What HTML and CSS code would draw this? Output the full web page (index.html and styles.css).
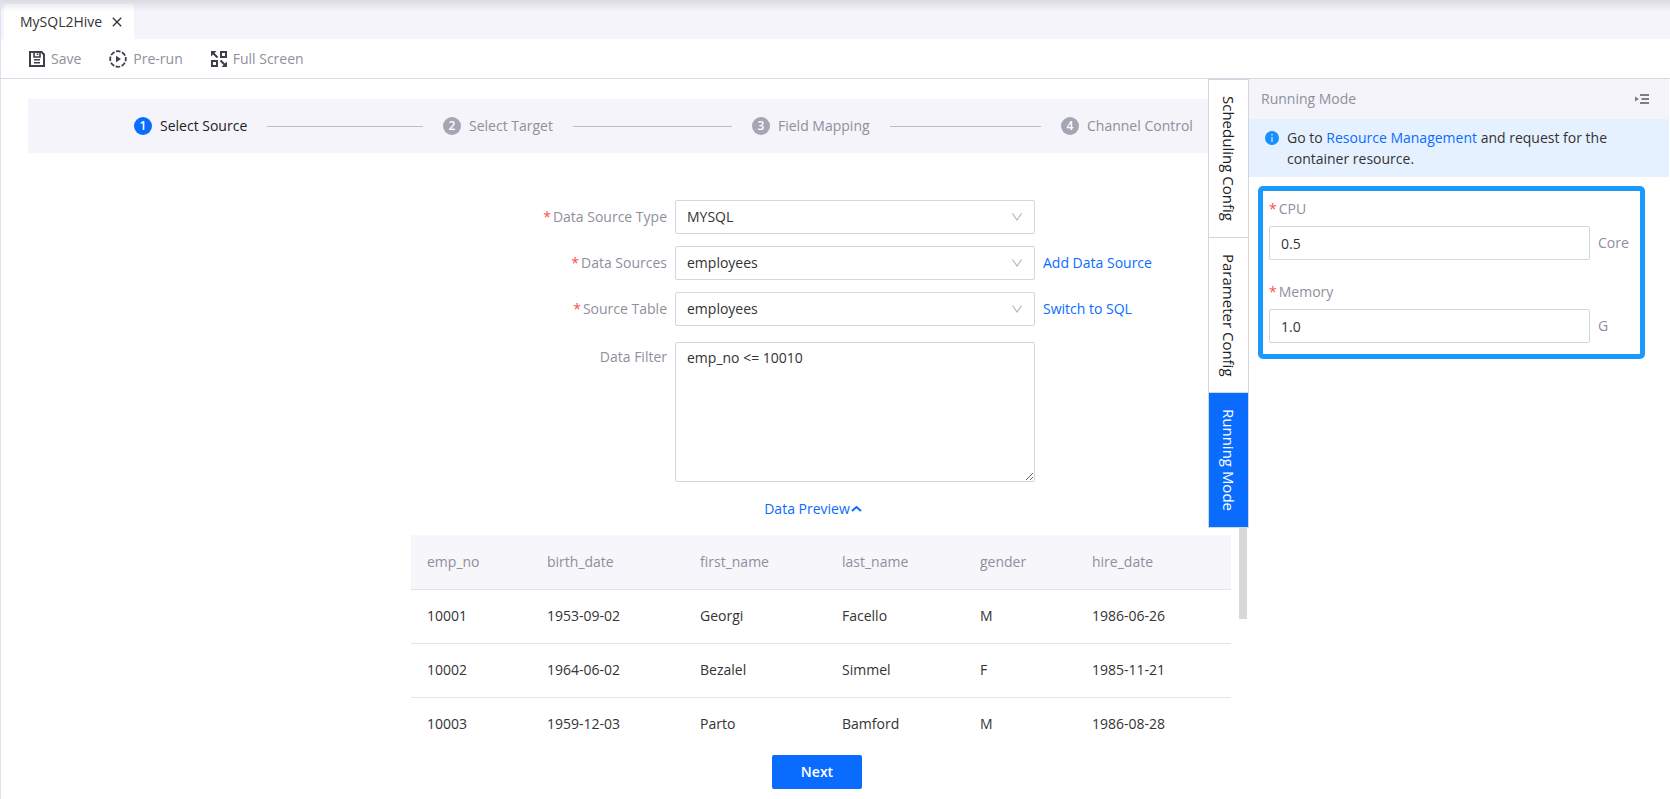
FILE: index.html
```html
<!DOCTYPE html>
<html lang="en">
<head>
<meta charset="utf-8">
<meta name="viewport" content="width=device-width, initial-scale=1">
<title>MySQL2Hive</title>
<link rel="stylesheet" href="styles.css">
</head>
<body>
<div class="app">
  <nav class="filetabs" aria-label="Open jobs">
    <div class="filetab">
      <span>MySQL2Hive</span>
      <button class="icon-button" type="button" aria-label="Close">
        <svg width="10" height="10" viewBox="0 0 10 10" fill="none" stroke="#333" stroke-width="1.3"><path d="M.8.8l8.4 8.4M9.2.8L.8 9.2"/></svg>
      </button>
    </div>
  </nav>

  <div class="toolbar">
    <button class="tool" type="button">
      <svg width="16" height="16" viewBox="0 0 16 16" fill="none" stroke="#3f3f4a" stroke-width="2"><path d="M1 1h11.5L15 3.500V15H1z"/><path d="M5 1v5h6V1M8.500 2.500V4" stroke-width="1.600"/><path d="M5 8.800h6M5 11.800h6" stroke-width="1.500"/></svg>
      Save
    </button>
    <button class="tool" type="button">
      <svg width="18" height="18" viewBox="0 0 18 18" fill="none" stroke="#3f3f4a" stroke-width="1.800"><circle cx="9" cy="9" r="7.800" stroke-dasharray="4.600 1.526" stroke-dashoffset="2.300"/><path d="M7 5.800L12 9l-5 3.200z" fill="#3f3f4a" stroke="none"/></svg>
      Pre-run
    </button>
    <button class="tool" type="button">
      <svg width="16" height="16" viewBox="0 0 16 16" fill="none" stroke="#3f3f4a" stroke-width="2"><path d="M10 1h5v5h-5zM1 10h5v5H1z"/><path d="M1.500 1.500l5 5M9.500 9.500l5 5"/><path d="M0 0h5.500L0 5.500zM16 16h-5.500L16 10.500z" fill="#3f3f4a" stroke="none"/></svg>
      Full Screen
    </button>
  </div>

  <div class="workspace">
    <main class="main">
      <div class="scroller">
        <ol class="steps">
          <li class="step step-active"><span class="step-number">1</span>Select Source</li>
          <li class="step"><span class="step-number">2</span>Select Target</li>
          <li class="step"><span class="step-number">3</span>Field Mapping</li>
          <li class="step"><span class="step-number">4</span>Channel Control</li>
        </ol>

        <form class="form">
          <label class="label required" for="type">Data Source Type</label>
          <div class="select">
            <select id="type"><option>MYSQL</option></select>
            <svg width="12" height="10" viewBox="0 0 12 10" fill="none" stroke="#b4b4c0" stroke-width="1.200"><path d="M1.500 1.500L6 8l4.500-6.500"/></svg>
          </div>
          <span></span>

          <label class="label required" for="source">Data Sources</label>
          <div class="select">
            <select id="source"><option>employees</option></select>
            <svg width="12" height="10" viewBox="0 0 12 10" fill="none" stroke="#b4b4c0" stroke-width="1.200"><path d="M1.500 1.500L6 8l4.500-6.500"/></svg>
          </div>
          <a class="link" href="#">Add Data Source</a>

          <label class="label required" for="table">Source Table</label>
          <div class="select">
            <select id="table"><option>employees</option></select>
            <svg width="12" height="10" viewBox="0 0 12 10" fill="none" stroke="#b4b4c0" stroke-width="1.200"><path d="M1.500 1.500L6 8l4.500-6.500"/></svg>
          </div>
          <a class="link" href="#">Switch to SQL</a>

          <label class="label label-top" for="filter">Data Filter</label>
          <textarea class="filter" id="filter">emp_no &lt;= 10010</textarea>
          <span></span>
        </form>

        <section class="preview">
          <button class="preview-toggle" type="button">Data Preview<svg width="11" height="10" viewBox="0 0 11 10" fill="none" stroke="#0a6cff" stroke-width="2"><path d="M1 7l4.500-4L10 7"/></svg></button>
          <table class="data">
            <colgroup><col class="c-no"><col class="c-birth"><col class="c-first"><col class="c-last"><col class="c-gender"><col></colgroup>
            <thead>
              <tr><th>emp_no</th><th>birth_date</th><th>first_name</th><th>last_name</th><th>gender</th><th>hire_date</th></tr>
            </thead>
            <tbody>
              <tr><td>10001</td><td>1953-09-02</td><td>Georgi</td><td>Facello</td><td>M</td><td>1986-06-26</td></tr>
              <tr><td>10002</td><td>1964-06-02</td><td>Bezalel</td><td>Simmel</td><td>F</td><td>1985-11-21</td></tr>
              <tr><td>10003</td><td>1959-12-03</td><td>Parto</td><td>Bamford</td><td>M</td><td>1986-08-28</td></tr>
            </tbody>
          </table>
        </section>
      </div>
      <div class="scroll-thumb"></div>
      <footer class="actions"><button class="primary" type="button">Next</button></footer>
      <div class="sidetabs">
        <button class="sidetab" type="button">Scheduling Config</button>
        <button class="sidetab" type="button">Parameter Config</button>
        <button class="sidetab sidetab-active" type="button">Running Mode</button>
      </div>
    </main>

    <aside class="panel">
      <header class="panel-header">
        <span>Running Mode</span>
        <button class="icon-button" type="button" aria-label="Collapse panel">
          <svg width="14" height="10" viewBox="0 0 14 10" fill="none" stroke="#7d7d8a" stroke-width="1.800"><path d="M5 1h9M6.500 5H14M5 9h9"/><path d="M0 2.500L4 5 0 7.500z" fill="#7d7d8a" stroke="none"/></svg>
        </button>
      </header>
      <div class="notice">
        <svg width="14" height="14" viewBox="0 0 14 14"><circle cx="7" cy="7" r="7" fill="#1890ff"/><path d="M7 3v1.600M7 6v5" stroke="#d8ecff" stroke-width="1.200"/></svg>
        <p>Go to <a class="link" href="#">Resource Management</a> and request for the container resource.</p>
      </div>
      <form class="resources">
        <div class="field">
          <label class="label required" for="cpu">CPU</label>
          <div class="field-row"><input id="cpu" type="text" value="0.5"><span>Core</span></div>
        </div>
        <div class="field">
          <label class="label required" for="memory">Memory</label>
          <div class="field-row"><input id="memory" type="text" value="1.0"><span>G</span></div>
        </div>
      </form>
    </aside>
  </div>
</div>
</body>
</html>
```
FILE: styles.css
```css
* {
  box-sizing: border-box;
}

body {
  margin: 0;
  color: #333;
  font: 14px/20px "Open Sans", "Noto Sans", sans-serif;
}

button,
input,
select,
textarea {
  color: inherit;
  font: inherit;
}

button {
  padding: 0;
  border: 0;
  background: none;
  cursor: pointer;
}

.link {
  color: #0a6cff;
  text-decoration: none;
}

.icon-button {
  display: flex;
}

.app {
  display: flex;
  flex-direction: column;
  height: 100vh;
  border-left: 1px solid #d9e4f2;
}

/* Job tabs */
.filetabs {
  position: relative;
  display: flex;
  padding: 4px 3px 0;
  background: #f4f4fa;
}

.filetabs::after {
  content: "";
  position: absolute;
  inset: 0 0 auto;
  height: 12px;
  background: linear-gradient(rgba(70, 70, 90, 0.14), rgba(70, 70, 90, 0));
  pointer-events: none;
}

.filetab {
  display: flex;
  align-items: center;
  gap: 10px;
  height: 35px;
  padding: 0 12px 0 16px;
  border-radius: 4px 4px 0 0;
  background: #fff;
}

/* Toolbar */
.toolbar {
  display: flex;
  gap: 28px;
  height: 40px;
  padding: 0 28px;
  border-bottom: 1px solid #d9d9e3;
}

.tool {
  display: flex;
  align-items: center;
  gap: 6px;
  color: #8f8f9c;
}

.workspace {
  display: flex;
  flex: 1;
  min-height: 0;
}

/* Main pane */
.main {
  position: relative;
  display: flex;
  flex: 1;
  flex-direction: column;
  min-width: 0;
}

.scroller {
  flex: 1;
  min-height: 0;
  padding: 20px 18px 0 27px;
  overflow-y: auto;
  scrollbar-width: none;
}

.scroll-thumb {
  position: absolute;
  top: 2px;
  right: 2px;
  width: 8px;
  height: 538px;
  background: #d8d8d8;
}

.steps {
  display: flex;
  gap: 20px;
  margin: 0;
  padding: 17px 18px 17px 106px;
  background: #f4f4fa;
  list-style: none;
}

.step {
  display: flex;
  flex: 1;
  align-items: center;
  gap: 8px;
  color: #8f8f9c;
  white-space: nowrap;
}

.step:last-child {
  flex: 0 0 152px;
}

.step:not(:last-child)::after {
  content: "";
  flex: 1;
  height: 1px;
  margin-left: 12px;
  background: #bcbcca;
}

.step-number {
  width: 18px;
  border-radius: 9px;
  background: #a5a5b3;
  color: #fff;
  font-size: 12px;
  font-weight: 600;
  line-height: 18px;
  text-align: center;
}

.step-active {
  color: #222;
}

.step-active .step-number {
  background: #0a6cff;
}

.form {
  display: grid;
  grid-template-columns: 1fr 360px 188px;
  gap: 12px 8px;
  align-items: center;
  padding-top: 47px;
}

.label {
  color: #8f8f9c;
}

.form .label {
  text-align: right;
}

.form .label-top {
  align-self: start;
  padding-top: 9px;
}

.required::before {
  content: "*";
  margin-right: 2px;
  color: #ff4d4f;
}

.select {
  display: grid;
  align-items: center;
}

.select > * {
  grid-area: 1 / 1;
}

.select svg {
  justify-self: end;
  margin-right: 12px;
  pointer-events: none;
}

.select select,
.field-row input,
.filter {
  width: 100%;
  height: 34px;
  padding: 0 11px;
  border: 1px solid #d5d5df;
  border-radius: 2px;
  background: #fff;
  appearance: none;
}

.form .filter {
  display: block;
  height: 140px;
  margin-top: 4px;
  padding: 5px 11px;
  resize: both;
}

.preview {
  width: 820px;
  margin-left: auto;
  padding-top: 17px;
}

.preview-toggle {
  display: flex;
  align-items: center;
  gap: 1px;
  margin: 0 auto;
  padding-right: 16px;
  color: #0a6cff;
}

.data {
  width: 100%;
  margin-top: 16px;
  border-collapse: collapse;
  table-layout: fixed;
}

.data th,
.data td {
  height: 54px;
  padding: 0 16px;
  border-bottom: 1px solid #e3e3e8;
  font-weight: 400;
  text-align: left;
}

.data th {
  background: #f6f6fb;
  color: #8f8f9c;
}

.c-no { width: 120px; }
.c-birth { width: 153px; }
.c-first { width: 142px; }
.c-last { width: 138px; }
.c-gender { width: 112px; }

.actions {
  display: flex;
  justify-content: flex-end;
  padding: 5px 387px 10px 0;
  background: #fff;
}

.primary {
  width: 90px;
  height: 34px;
  border-radius: 2px;
  background: #0a6cff;
  color: #fff;
  font-weight: 600;
}

/* Vertical tabs over the right edge of the main pane */
.sidetabs {
  position: absolute;
  top: 0;
  right: 0;
  width: 41px;
  border: 1px solid #d5d5df;
  background: #fff;
}

.sidetab {
  display: block;
  width: 39px;
  padding: 16px 0;
  color: #222;
  font-size: 15px;
  line-height: 39px;
  writing-mode: vertical-rl;
}

.sidetab + .sidetab {
  border-top: 1px solid #d5d5df;
}

.sidetab-active {
  background: #0a6cff;
  color: #fff;
}

/* Side panel */
.panel {
  flex: 0 0 421px;
  padding-right: 1px;
}

.panel-header {
  display: flex;
  align-items: center;
  justify-content: space-between;
  height: 40px;
  padding: 0 20px 0 12px;
  background: #f4f4fa;
  color: #8f8f9c;
}

.notice {
  display: flex;
  gap: 8px;
  padding: 8px 40px 8px 16px;
  background: #e6f1ff;
  line-height: 21px;
}

.notice svg {
  flex: none;
  margin-top: 4px;
}

.notice p {
  margin: 0;
}

.resources {
  display: grid;
  gap: 22px;
  margin: 9px 24px 0 9px;
  padding: 8px 8px 11px 6px;
  border: 5px solid #1a9aff;
  border-radius: 5px;
}

.field {
  display: grid;
  gap: 7px;
}

.field-row {
  display: grid;
  grid-template-columns: 1fr 34px;
  gap: 8px;
  align-items: center;
  color: #8f8f9c;
}

.field-row input {
  color: #333;
}
```
